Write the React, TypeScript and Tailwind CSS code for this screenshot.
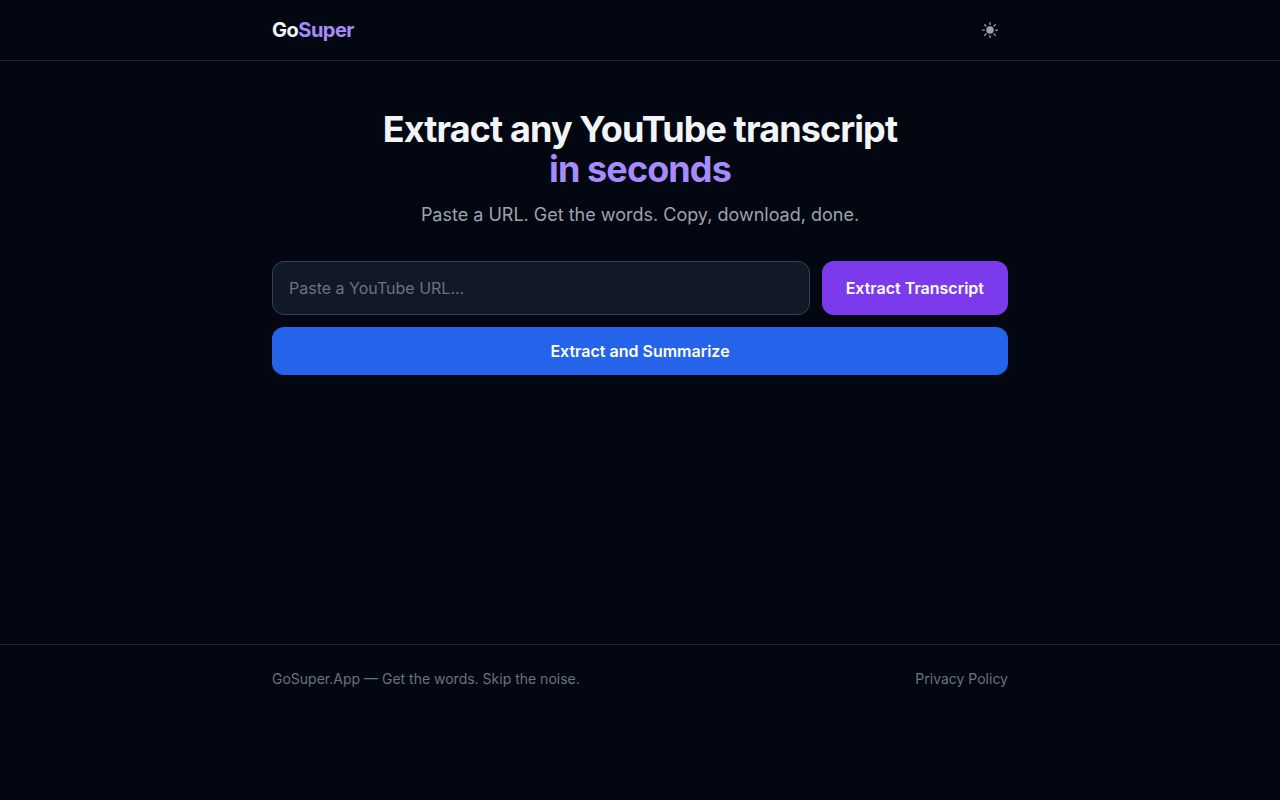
import { HiSun } from "react-icons/hi2";

export default function App() {
  return (
    <div className="min-h-screen bg-[#030712] font-['Inter',sans-serif] text-[#f3f4f6]">
      <header className="border-b border-[#1f2937]">
        <div className="mx-auto flex max-w-3xl items-center justify-between px-4 py-3">
          <a href="/" className="text-xl font-bold tracking-tight">
            Go<span className="text-[#a78bfa]">Super</span>
          </a>
          <button type="button" aria-label="Switch to light mode" className="rounded-lg p-2 text-[#9ca3af]">
            <HiSun className="size-5" aria-hidden="true" />
          </button>
        </div>
      </header>
      <main className="mx-auto max-w-3xl px-4 py-12">
        <div className="mb-8 text-center">
          <h1 className="mb-3 text-4xl font-bold tracking-tight">
            Extract any YouTube transcript
            <br />
            <span className="text-[#a78bfa]">in seconds</span>
          </h1>
          <p className="text-lg text-[#9ca3af]">Paste a URL. Get the words. Copy, download, done.</p>
        </div>
        <form className="flex flex-col gap-3" onSubmit={(e) => e.preventDefault()}>
          <div className="flex gap-3">
            <input
              type="url"
              aria-label="YouTube URL"
              placeholder="Paste a YouTube URL..."
              className="min-w-0 flex-1 rounded-xl border border-[#374151] bg-[#111827] px-4 py-3.5 placeholder:text-[#6b7280]"
            />
            <button type="submit" className="rounded-xl bg-[#7c3aed] px-6 font-semibold text-white">
              Extract Transcript
            </button>
          </div>
          <button type="button" className="rounded-xl bg-[#2563eb] px-6 py-3 font-semibold text-white">
            Extract and Summarize
          </button>
        </form>
      </main>
      <footer className="mt-[221px] border-t border-[#1f2937]">
        <div className="mx-auto flex max-w-3xl items-center justify-between px-4 py-6 text-sm text-[#6b7280]">
          <p>GoSuper.App — Get the words. Skip the noise.</p>
          <a href="/privacy">Privacy Policy</a>
        </div>
      </footer>
    </div>
  );
}
